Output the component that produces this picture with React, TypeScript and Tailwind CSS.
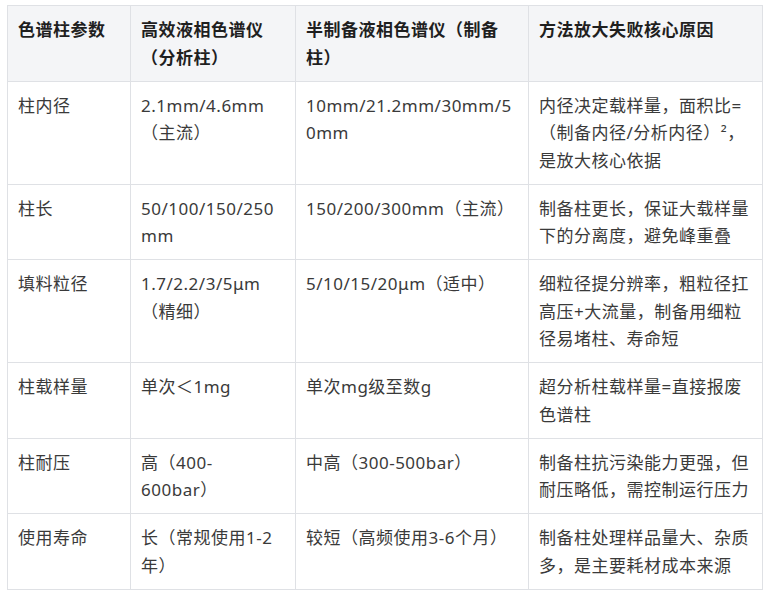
import React from 'react';

type Row = [string, React.ReactNode, string, string];

const HEADERS = ['色谱柱参数', '高效液相色谱仪（分析柱）', '半制备液相色谱仪（制备柱）', '方法放大失败核心原因'];

const ROWS: Row[] = [
  ['柱内径', '2.1mm/4.6mm（主流）', '10mm/21.2mm/30mm/50mm', '内径决定载样量，面积比=（制备内径/分析内径）²，是放大核心依据'],
  ['柱长', '50/100/150/250mm', '150/200/300mm（主流）', '制备柱更长，保证大载样量下的分离度，避免峰重叠'],
  ['填料粒径', '1.7/2.2/3/5μm（精细）', '5/10/15/20μm（适中）', '细粒径提分辨率，粗粒径扛高压+大流量，制备用细粒径易堵柱、寿命短'],
  ['柱载样量', '单次＜1mg', '单次mg级至数g', '超分析柱载样量=直接报废色谱柱'],
  ['柱耐压', <>高（400-<br />600bar）</>, '中高（300-500bar）', '制备柱抗污染能力更强，但耐压略低，需控制运行压力'],
  ['使用寿命', '长（常规使用1-2年）', '较短（高频使用3-6个月）', '制备柱处理样品量大、杂质多，是主要耗材成本来源'],
];

const App: React.FC = () => {
  return (
    <div className="min-h-screen bg-white pl-[7px] pt-[5px] font-['Noto_Sans','Noto_Sans_CJK_SC',sans-serif] text-[17px] leading-[27.5px] tracking-[0.5px]">
      <table className="w-[755px] table-fixed border-collapse">
        <colgroup>
          <col className="w-[123px]" />
          <col className="w-[165px]" />
          <col className="w-[233px]" />
          <col className="w-[234px]" />
        </colgroup>
        <thead>
          <tr className="bg-[#f4f5f7]">
            {HEADERS.map(h => (
              <th
                key={h}
                className="border border-[#dfe1e5] pl-[10px] pr-[10px] pt-[10px] pb-[9.5px] text-left align-top font-bold text-[#1f1f1f] [overflow-wrap:anywhere]"
              >
                {h}
              </th>
            ))}
          </tr>
        </thead>
        <tbody>
          {ROWS.map(row => (
            <tr key={row[0]}>
              {row.map((cell, i) => (
                <td
                  key={i}
                  className="border border-[#dfe1e5] pl-[10px] pr-[10px] pt-[10px] pb-[9.5px] align-top text-[#3a3a3a] [overflow-wrap:anywhere]"
                >
                  {cell}
                </td>
              ))}
            </tr>
          ))}
        </tbody>
      </table>
    </div>
  );
};

export default App;
